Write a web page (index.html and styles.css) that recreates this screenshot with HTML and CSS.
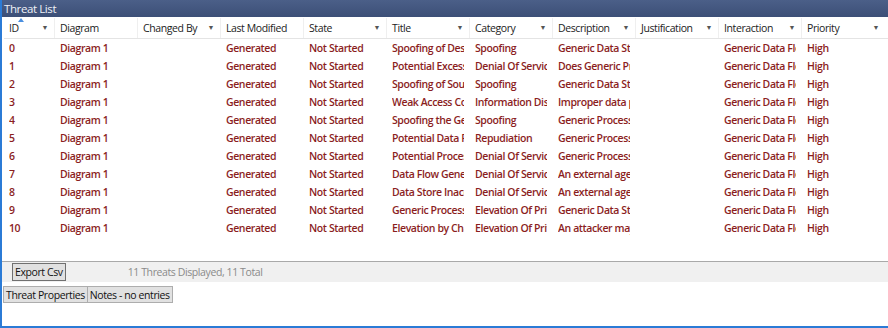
FILE: index.html
```html
<!DOCTYPE html>
<html lang="en">
<head>
  <meta charset="UTF-8">
  <title>Threat List</title>
  <link rel="stylesheet" href="styles.css">
</head>
<body>
<div class="window">
  <div class="titlebar">Threat List</div>
  <div class="grid">
    <div class="row head">
      <div class="cell id sorted">ID<span class="arrow">▼</span></div>
      <div class="cell">Diagram</div>
      <div class="cell">Changed By<span class="arrow">▼</span></div>
      <div class="cell">Last Modified</div>
      <div class="cell">State<span class="arrow">▼</span></div>
      <div class="cell">Title<span class="arrow">▼</span></div>
      <div class="cell">Category<span class="arrow">▼</span></div>
      <div class="cell">Description<span class="arrow">▼</span></div>
      <div class="cell">Justification<span class="arrow">▼</span></div>
      <div class="cell">Interaction<span class="arrow">▼</span></div>
      <div class="cell">Priority<span class="arrow">▼</span></div>
    </div>
    <div id="rows"></div>
  </div>
  <div class="statusbar">
    <button class="btn">Export Csv</button>
    <span class="count">11 Threats Displayed, 11 Total</span>
  </div>
  <div class="tabs">
    <button class="tab">Threat Properties</button>
    <button class="tab">Notes - no entries</button>
  </div>
</div>
<script>
const threats = [
  ["Spoofing of Destination Data Store", "Spoofing", "Generic Data Store may be spoofed"],
  ["Potential Excessive Resource Consumption", "Denial Of Service", "Does Generic Process take explicit steps"],
  ["Spoofing of Source Data Store", "Spoofing", "Generic Data Store may be spoofed"],
  ["Weak Access Control for a Resource", "Information Disclosure", "Improper data protection"],
  ["Spoofing the Generic Process", "Spoofing", "Generic Process may be spoofed"],
  ["Potential Data Repudiation", "Repudiation", "Generic Process claims"],
  ["Potential Process Crash or Stop", "Denial Of Service", "Generic Process crashes"],
  ["Data Flow Generic Data Flow Is Potentially Interrupted", "Denial Of Service", "An external agent interrupts"],
  ["Data Store Inaccessible", "Denial Of Service", "An external agent prevents"],
  ["Generic Process May be Subject to Elevation of Privilege", "Elevation Of Privilege", "Generic Data Store may be able"],
  ["Elevation by Changing the Execution Flow", "Elevation Of Privilege", "An attacker may pass data"]
];
const rows = document.getElementById('rows');
threats.forEach((t, i) => {
  const cells = [i, "Diagram 1", "", "Generated", "Not Started", t[0], t[1], t[2], "", "Generic Data Flow", "High"];
  const row = document.createElement('div');
  row.className = 'row';
  cells.forEach((c, j) => {
    const cell = document.createElement('div');
    cell.className = j === 0 ? 'cell id' : 'cell';
    const span = document.createElement('span');
    span.className = 'clip';
    span.textContent = c;
    cell.appendChild(span);
    row.appendChild(cell);
  });
  rows.appendChild(row);
});
</script>
</body>
</html>
```

FILE: styles.css
```css
body {
  margin: 0;
  font-family: 'Open Sans', 'Noto Sans', sans-serif;
  background: #fff;
  letter-spacing: -0.4px;
}
.window {
  width: 888px;
  height: 328px;
  box-sizing: border-box;
  border-left: 2px solid #2b7bd6;
  border-bottom: 2px solid #2b7bd6;
  display: flex;
  flex-direction: column;
}
.titlebar {
  height: 17px;
  flex: none;
  background: linear-gradient(#4b5f88, #3c4f77);
  color: #eef1f7;
  font-size: 11.5px;
  line-height: 17px;
  padding-left: 2px;
}
.grid {
  flex: 1;
  padding-left: 2px;
  overflow: hidden;
}
.row {
  display: grid;
  grid-template-columns: 51px repeat(10, 83px);
  height: 18px;
}
.cell {
  position: relative;
  white-space: nowrap;
  padding: 0 6px 0 5px;
  font-size: 10.5px;
  line-height: 18px;
  font-weight: 600;
  color: #8b1e1e;
  min-width: 0;
}
.clip {
  display: block;
  overflow: hidden;
}
.row.head {
  height: 20px;
  margin-top: 1px;
  border-bottom: 1px solid #e4e4e4;
}
.head .cell {
  font-weight: 400;
  color: #222;
  line-height: 20px;
  border-right: 1px solid #efefef;
}
.head .cell:last-child {
  border-right: none;
}
.arrow {
  position: absolute;
  right: 6px;
  top: 0;
  font-size: 7px;
  color: #555;
}
.sorted::before {
  content: '';
  position: absolute;
  left: 14px;
  top: 0;
  border-left: 3px solid transparent;
  border-right: 3px solid transparent;
  border-bottom: 4px solid #4a8fe0;
}
.statusbar {
  height: 20px;
  flex: none;
  background: #f0f0f0;
  border-top: 1px solid #a9a9a9;
  display: flex;
  align-items: center;
  gap: 62px;
  padding-left: 10px;
  font-size: 10.5px;
}
.btn, .tab {
  font-family: inherit;
  letter-spacing: inherit;
  font-size: 10.5px;
  color: #111;
  background: #e1e1e1;
  border: 1px solid #adadad;
  margin: 0;
  padding: 0 2px;
  height: 18px;
  line-height: 16px;
}
.btn {
  border-color: #707070;
}
.count {
  color: #8a8a8a;
}
.tabs {
  display: flex;
  flex: none;
  padding: 4px 0 0 1px;
  height: 40px;
}
.tab {
  height: 17px;
  margin-right: -1px;
}
```
